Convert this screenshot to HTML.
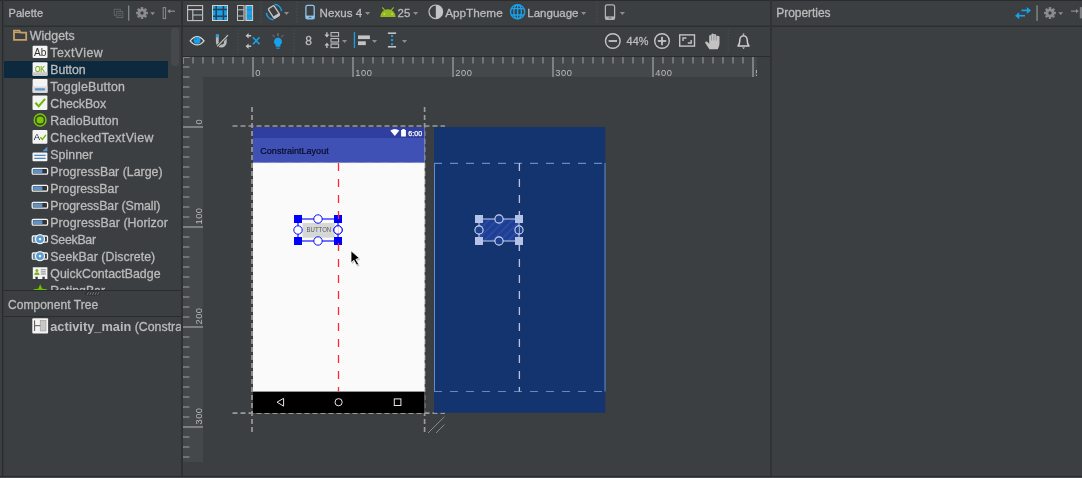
<!DOCTYPE html>
<html><head><meta charset="utf-8"><title>Layout Editor</title>
<style>
html,body{margin:0;padding:0;}
body{width:1082px;height:478px;overflow:hidden;background:#3c3f41;font-family:"Liberation Sans",sans-serif;color:#bbbbbb;position:relative;font-size:12px;}
.abs{position:absolute;}
.ln{position:absolute;background:#2b2b2b;}
.t{position:absolute;white-space:nowrap;line-height:14px;}
#palette{position:absolute;left:4px;top:26px;width:178px;height:264px;overflow:hidden;}
.row{position:absolute;left:0;width:164px;height:17px;overflow:hidden;}
.row .lbl{position:absolute;left:46px;top:1px;font-size:12.35px;line-height:15px;white-space:nowrap;}
.row svg{position:absolute;left:28px;top:0px;}
svg{display:block;overflow:visible;position:absolute;will-change:transform;}
svg text{font-family:"Liberation Sans",sans-serif;}
.lb{stroke:#bbbbbb;stroke-width:0.3px;}
</style></head><body>

<div class="ln" style="left:0;top:0;width:1082px;height:1px;"></div>
<div class="ln" style="left:2px;top:0;width:1px;height:477px;"></div>
<div class="ln" style="left:3px;top:0;width:1px;height:477px;background:#35383a;"></div>
<div class="ln" style="left:0;top:476px;width:1082px;height:1px;"></div>
<div class="ln" style="left:0;top:477px;width:1082px;height:1px;background:#4a4d4f;"></div>
<div class="ln" style="left:4px;top:25px;width:1078px;height:1px;background:#34373a;"></div>
<div class="ln" style="left:4px;top:26px;width:1078px;height:1px;background:#2d2f31;"></div>
<div class="ln" style="left:181px;top:0;width:2px;height:476px;background:#2e3032;"></div>
<div class="ln" style="left:770px;top:0;width:2px;height:476px;background:#303234;"></div>
<div class="ln" style="left:183px;top:56px;width:587px;height:1px;"></div>
<div class="ln" style="left:4px;top:290px;width:177px;height:1px;"></div>
<div class="ln" style="left:4px;top:316px;width:177px;height:1px;"></div>
<div class="abs" style="left:4px;top:61px;width:164px;height:17px;background:#0d293e;"></div>
<div class="abs" style="left:171px;top:28px;width:8px;height:38px;border-radius:4px;background:#46494b;"></div>
<svg style="left:183px;top:57px;overflow:hidden;" width="574" height="20" viewBox="183 57 574 20"><rect x="183" y="57" width="574" height="20" fill="#44484a"/><line x1="183" y1="57" x2="183" y2="63.5" stroke="#7d8081" stroke-width="1.6"/><line x1="193" y1="57" x2="193" y2="63.5" stroke="#7d8081" stroke-width="1.6"/><line x1="203" y1="57" x2="203" y2="63.5" stroke="#7d8081" stroke-width="1.6"/><line x1="213" y1="57" x2="213" y2="63.5" stroke="#7d8081" stroke-width="1.6"/><line x1="223" y1="57" x2="223" y2="63.5" stroke="#7d8081" stroke-width="1.6"/><line x1="233" y1="57" x2="233" y2="63.5" stroke="#7d8081" stroke-width="1.6"/><line x1="243" y1="57" x2="243" y2="63.5" stroke="#7d8081" stroke-width="1.6"/><line x1="253" y1="57" x2="253" y2="77" stroke="#7d8081" stroke-width="2"/><text x="255.3" y="76" font-size="9.3" fill="#bbbbbb" letter-spacing="0.5">0</text><line x1="263" y1="57" x2="263" y2="63.5" stroke="#7d8081" stroke-width="1.6"/><line x1="273" y1="57" x2="273" y2="63.5" stroke="#7d8081" stroke-width="1.6"/><line x1="283" y1="57" x2="283" y2="63.5" stroke="#7d8081" stroke-width="1.6"/><line x1="293" y1="57" x2="293" y2="63.5" stroke="#7d8081" stroke-width="1.6"/><line x1="303" y1="57" x2="303" y2="63.5" stroke="#7d8081" stroke-width="1.6"/><line x1="313" y1="57" x2="313" y2="63.5" stroke="#7d8081" stroke-width="1.6"/><line x1="323" y1="57" x2="323" y2="63.5" stroke="#7d8081" stroke-width="1.6"/><line x1="333" y1="57" x2="333" y2="63.5" stroke="#7d8081" stroke-width="1.6"/><line x1="343" y1="57" x2="343" y2="63.5" stroke="#7d8081" stroke-width="1.6"/><line x1="353" y1="57" x2="353" y2="77" stroke="#7d8081" stroke-width="2"/><text x="355.3" y="76" font-size="9.3" fill="#bbbbbb" letter-spacing="0.5">100</text><line x1="363" y1="57" x2="363" y2="63.5" stroke="#7d8081" stroke-width="1.6"/><line x1="373" y1="57" x2="373" y2="63.5" stroke="#7d8081" stroke-width="1.6"/><line x1="383" y1="57" x2="383" y2="63.5" stroke="#7d8081" stroke-width="1.6"/><line x1="393" y1="57" x2="393" y2="63.5" stroke="#7d8081" stroke-width="1.6"/><line x1="403" y1="57" x2="403" y2="63.5" stroke="#7d8081" stroke-width="1.6"/><line x1="413" y1="57" x2="413" y2="63.5" stroke="#7d8081" stroke-width="1.6"/><line x1="423" y1="57" x2="423" y2="63.5" stroke="#7d8081" stroke-width="1.6"/><line x1="433" y1="57" x2="433" y2="63.5" stroke="#7d8081" stroke-width="1.6"/><line x1="443" y1="57" x2="443" y2="63.5" stroke="#7d8081" stroke-width="1.6"/><line x1="453" y1="57" x2="453" y2="77" stroke="#7d8081" stroke-width="2"/><text x="455.3" y="76" font-size="9.3" fill="#bbbbbb" letter-spacing="0.5">200</text><line x1="463" y1="57" x2="463" y2="63.5" stroke="#7d8081" stroke-width="1.6"/><line x1="473" y1="57" x2="473" y2="63.5" stroke="#7d8081" stroke-width="1.6"/><line x1="483" y1="57" x2="483" y2="63.5" stroke="#7d8081" stroke-width="1.6"/><line x1="493" y1="57" x2="493" y2="63.5" stroke="#7d8081" stroke-width="1.6"/><line x1="503" y1="57" x2="503" y2="63.5" stroke="#7d8081" stroke-width="1.6"/><line x1="513" y1="57" x2="513" y2="63.5" stroke="#7d8081" stroke-width="1.6"/><line x1="523" y1="57" x2="523" y2="63.5" stroke="#7d8081" stroke-width="1.6"/><line x1="533" y1="57" x2="533" y2="63.5" stroke="#7d8081" stroke-width="1.6"/><line x1="543" y1="57" x2="543" y2="63.5" stroke="#7d8081" stroke-width="1.6"/><line x1="553" y1="57" x2="553" y2="77" stroke="#7d8081" stroke-width="2"/><text x="555.3" y="76" font-size="9.3" fill="#bbbbbb" letter-spacing="0.5">300</text><line x1="563" y1="57" x2="563" y2="63.5" stroke="#7d8081" stroke-width="1.6"/><line x1="573" y1="57" x2="573" y2="63.5" stroke="#7d8081" stroke-width="1.6"/><line x1="583" y1="57" x2="583" y2="63.5" stroke="#7d8081" stroke-width="1.6"/><line x1="593" y1="57" x2="593" y2="63.5" stroke="#7d8081" stroke-width="1.6"/><line x1="603" y1="57" x2="603" y2="63.5" stroke="#7d8081" stroke-width="1.6"/><line x1="613" y1="57" x2="613" y2="63.5" stroke="#7d8081" stroke-width="1.6"/><line x1="623" y1="57" x2="623" y2="63.5" stroke="#7d8081" stroke-width="1.6"/><line x1="633" y1="57" x2="633" y2="63.5" stroke="#7d8081" stroke-width="1.6"/><line x1="643" y1="57" x2="643" y2="63.5" stroke="#7d8081" stroke-width="1.6"/><line x1="653" y1="57" x2="653" y2="77" stroke="#7d8081" stroke-width="2"/><text x="655.3" y="76" font-size="9.3" fill="#bbbbbb" letter-spacing="0.5">400</text><line x1="663" y1="57" x2="663" y2="63.5" stroke="#7d8081" stroke-width="1.6"/><line x1="673" y1="57" x2="673" y2="63.5" stroke="#7d8081" stroke-width="1.6"/><line x1="683" y1="57" x2="683" y2="63.5" stroke="#7d8081" stroke-width="1.6"/><line x1="693" y1="57" x2="693" y2="63.5" stroke="#7d8081" stroke-width="1.6"/><line x1="703" y1="57" x2="703" y2="63.5" stroke="#7d8081" stroke-width="1.6"/><line x1="713" y1="57" x2="713" y2="63.5" stroke="#7d8081" stroke-width="1.6"/><line x1="723" y1="57" x2="723" y2="63.5" stroke="#7d8081" stroke-width="1.6"/><line x1="733" y1="57" x2="733" y2="63.5" stroke="#7d8081" stroke-width="1.6"/><line x1="743" y1="57" x2="743" y2="63.5" stroke="#7d8081" stroke-width="1.6"/><line x1="753" y1="57" x2="753" y2="77" stroke="#7d8081" stroke-width="2"/><text x="755.3" y="76" font-size="9.3" fill="#bbbbbb" letter-spacing="0.5">500</text><line x1="183" y1="67" x2="189.5" y2="67" stroke="#7d8081" stroke-width="1.6"/></svg>
<svg style="left:183px;top:77px;" width="20" height="385" viewBox="183 77 20 385"><rect x="183" y="77" width="20" height="385" fill="#44484a"/><line x1="183" y1="77" x2="189.5" y2="77" stroke="#7d8081" stroke-width="1.6"/><line x1="183" y1="87" x2="189.5" y2="87" stroke="#7d8081" stroke-width="1.6"/><line x1="183" y1="97" x2="189.5" y2="97" stroke="#7d8081" stroke-width="1.6"/><line x1="183" y1="107" x2="189.5" y2="107" stroke="#7d8081" stroke-width="1.6"/><line x1="183" y1="117" x2="189.5" y2="117" stroke="#7d8081" stroke-width="1.6"/><line x1="183" y1="127" x2="203" y2="127" stroke="#7d8081" stroke-width="2"/><text transform="translate(202,124.5) rotate(-90)" font-size="9.3" letter-spacing="0.5" fill="#bbbbbb">0</text><line x1="183" y1="137" x2="189.5" y2="137" stroke="#7d8081" stroke-width="1.6"/><line x1="183" y1="147" x2="189.5" y2="147" stroke="#7d8081" stroke-width="1.6"/><line x1="183" y1="157" x2="189.5" y2="157" stroke="#7d8081" stroke-width="1.6"/><line x1="183" y1="167" x2="189.5" y2="167" stroke="#7d8081" stroke-width="1.6"/><line x1="183" y1="177" x2="189.5" y2="177" stroke="#7d8081" stroke-width="1.6"/><line x1="183" y1="187" x2="189.5" y2="187" stroke="#7d8081" stroke-width="1.6"/><line x1="183" y1="197" x2="189.5" y2="197" stroke="#7d8081" stroke-width="1.6"/><line x1="183" y1="207" x2="189.5" y2="207" stroke="#7d8081" stroke-width="1.6"/><line x1="183" y1="217" x2="189.5" y2="217" stroke="#7d8081" stroke-width="1.6"/><line x1="183" y1="227" x2="203" y2="227" stroke="#7d8081" stroke-width="2"/><text transform="translate(202,224.5) rotate(-90)" font-size="9.3" letter-spacing="0.5" fill="#bbbbbb">100</text><line x1="183" y1="237" x2="189.5" y2="237" stroke="#7d8081" stroke-width="1.6"/><line x1="183" y1="247" x2="189.5" y2="247" stroke="#7d8081" stroke-width="1.6"/><line x1="183" y1="257" x2="189.5" y2="257" stroke="#7d8081" stroke-width="1.6"/><line x1="183" y1="267" x2="189.5" y2="267" stroke="#7d8081" stroke-width="1.6"/><line x1="183" y1="277" x2="189.5" y2="277" stroke="#7d8081" stroke-width="1.6"/><line x1="183" y1="287" x2="189.5" y2="287" stroke="#7d8081" stroke-width="1.6"/><line x1="183" y1="297" x2="189.5" y2="297" stroke="#7d8081" stroke-width="1.6"/><line x1="183" y1="307" x2="189.5" y2="307" stroke="#7d8081" stroke-width="1.6"/><line x1="183" y1="317" x2="189.5" y2="317" stroke="#7d8081" stroke-width="1.6"/><line x1="183" y1="327" x2="203" y2="327" stroke="#7d8081" stroke-width="2"/><text transform="translate(202,324.5) rotate(-90)" font-size="9.3" letter-spacing="0.5" fill="#bbbbbb">200</text><line x1="183" y1="337" x2="189.5" y2="337" stroke="#7d8081" stroke-width="1.6"/><line x1="183" y1="347" x2="189.5" y2="347" stroke="#7d8081" stroke-width="1.6"/><line x1="183" y1="357" x2="189.5" y2="357" stroke="#7d8081" stroke-width="1.6"/><line x1="183" y1="367" x2="189.5" y2="367" stroke="#7d8081" stroke-width="1.6"/><line x1="183" y1="377" x2="189.5" y2="377" stroke="#7d8081" stroke-width="1.6"/><line x1="183" y1="387" x2="189.5" y2="387" stroke="#7d8081" stroke-width="1.6"/><line x1="183" y1="397" x2="189.5" y2="397" stroke="#7d8081" stroke-width="1.6"/><line x1="183" y1="407" x2="189.5" y2="407" stroke="#7d8081" stroke-width="1.6"/><line x1="183" y1="417" x2="189.5" y2="417" stroke="#7d8081" stroke-width="1.6"/><line x1="183" y1="427" x2="203" y2="427" stroke="#7d8081" stroke-width="2"/><text transform="translate(202,424.5) rotate(-90)" font-size="9.3" letter-spacing="0.5" fill="#bbbbbb">300</text><line x1="183" y1="437" x2="189.5" y2="437" stroke="#7d8081" stroke-width="1.6"/><line x1="183" y1="447" x2="189.5" y2="447" stroke="#7d8081" stroke-width="1.6"/><line x1="183" y1="457" x2="189.5" y2="457" stroke="#7d8081" stroke-width="1.6"/></svg>
<svg style="left:183px;top:57px;" width="8" height="8"><path d="M0.5 7 V0.5 H7" stroke="#7d8081" stroke-width="1" fill="none"/></svg>
<svg style="left:203px;top:77px;" width="554" height="385" viewBox="203 77 554 385"><line x1="232.5" y1="126" x2="445" y2="126" stroke="#9a9a97" stroke-width="1.7" stroke-dasharray="5 3"/><line x1="232.5" y1="413.1" x2="445" y2="413.1" stroke="#9a9a97" stroke-width="1.7" stroke-dasharray="5 3"/><line x1="252" y1="107" x2="252" y2="432" stroke="#9a9a97" stroke-width="1.7" stroke-dasharray="5 3"/><line x1="424.6" y1="107" x2="424.6" y2="432" stroke="#9a9a97" stroke-width="1.7" stroke-dasharray="5 3"/><rect x="253" y="127" width="171.6" height="286" fill="#fafafa"/><rect x="253" y="127" width="171.6" height="11" fill="#303f9f"/><rect x="253" y="138" width="171.6" height="24.7" fill="#3f51b5"/><rect x="253" y="391.6" width="171.6" height="21.4" fill="#000"/><line x1="253" y1="162.6" x2="424" y2="162.6" stroke="#8a96d6" stroke-width="1" stroke-dasharray="8 8" opacity="0.6"/><text x="260.3" y="153.9" font-size="9" fill="#080c28" stroke="#080c28" stroke-width="0.2" textLength="68.4" lengthAdjust="spacing">ConstraintLayout</text><path d="M390.3 130.6 Q394.8 127.6 399.3 130.6 L394.8 136 Z" fill="#fff"/><path d="M401.1 130 h1.2 v-1 h2.4 v1 h1.2 v6.5 h-4.8 Z" fill="#fff"/><text x="408.3" y="135.9" font-size="7" fill="#fff" stroke="#fff" stroke-width="0.25" textLength="13.8" lengthAdjust="spacing">6:00</text><path d="M283.6 398.3 L277 402.2 L283.6 406.1 Z" fill="none" stroke="#e8e8e8" stroke-width="1"/><circle cx="338.6" cy="402.2" r="3.6" fill="none" stroke="#e8e8e8" stroke-width="1"/><rect x="394.3" y="398.9" width="6.6" height="6.6" fill="none" stroke="#e8e8e8" stroke-width="1"/><rect x="302.5" y="223" width="32.3" height="14.7" fill="#d6d7d7"/><text x="306.6" y="232.4" font-size="6.6" fill="#5a5a5a" textLength="24.6" lengthAdjust="spacingAndGlyphs">BUTTON</text><rect x="298" y="219" width="40" height="22" fill="none" stroke="#0000ff" stroke-width="1.1"/><rect x="294" y="215" width="8" height="8" fill="#0000ff"/><rect x="334" y="215" width="8" height="8" fill="#0000ff"/><rect x="294" y="237" width="8" height="8" fill="#0000ff"/><rect x="334" y="237" width="8" height="8" fill="#0000ff"/><circle cx="318" cy="219" r="4.2" fill="#fff" stroke="#0a0aff" stroke-width="1"/><circle cx="318" cy="241" r="4.2" fill="#fff" stroke="#0a0aff" stroke-width="1"/><circle cx="298" cy="230" r="4.2" fill="#fff" stroke="#0a0aff" stroke-width="1"/><circle cx="338" cy="230" r="4.2" fill="#fff" stroke="#0a0aff" stroke-width="1"/><line x1="338.5" y1="163" x2="338.5" y2="391.5" stroke="#ff2a2a" stroke-width="1.3" stroke-dasharray="8 8"/><circle cx="338" cy="230" r="4.2" fill="#fff" fill-opacity="0.8" stroke="#0a0aff" stroke-width="1"/><path d="M428 433 L444.4 416.8 M436 433 L444.4 424.7" stroke="#8a8c8d" stroke-width="1" fill="none"/><rect x="434" y="127" width="171.2" height="285.8" fill="#14346f"/><line x1="434" y1="163.3" x2="605" y2="163.3" stroke="#6189c4" stroke-width="1.2" stroke-dasharray="8 8"/><line x1="434" y1="391.5" x2="605" y2="391.5" stroke="#6189c4" stroke-width="1.2" stroke-dasharray="8 8"/><line x1="434.5" y1="163" x2="434.5" y2="391.5" stroke="#5f8ed0" stroke-width="1"/><line x1="605" y1="163" x2="605" y2="391.5" stroke="#5f8ed0" stroke-width="1"/><line x1="519.4" y1="163" x2="519.4" y2="391.5" stroke="#b9c2d6" stroke-width="1.3" stroke-dasharray="8 8"/><defs><pattern id="hatch" width="5.6" height="5.6" patternUnits="userSpaceOnUse" patternTransform="rotate(45)"><line x1="3" y1="0" x2="3" y2="5.6" stroke="#4b4fd0" stroke-width="0.7"/></pattern></defs><rect x="479" y="219" width="40" height="22" fill="#1d4190"/><rect x="479" y="219" width="40" height="22" fill="url(#hatch)"/><rect x="479" y="219" width="40" height="22" fill="none" stroke="#b4c3e8" stroke-width="1.1"/><rect x="475" y="215" width="8" height="8" fill="#b4c3e8"/><rect x="515" y="215" width="8" height="8" fill="#b4c3e8"/><rect x="475" y="237" width="8" height="8" fill="#b4c3e8"/><rect x="515" y="237" width="8" height="8" fill="#b4c3e8"/><circle cx="499" cy="219" r="4.1" fill="#1d4190" stroke="#d0d8ee" stroke-width="1.1"/><circle cx="499" cy="241" r="4.1" fill="#1d4190" stroke="#d0d8ee" stroke-width="1.1"/><circle cx="479" cy="230" r="4.1" fill="#1d4190" stroke="#d0d8ee" stroke-width="1.1"/><circle cx="519" cy="230" r="4.1" fill="#1d4190" stroke="#d0d8ee" stroke-width="1.1"/><line x1="519.4" y1="211" x2="519.4" y2="251" stroke="#b9c2d6" stroke-width="1.1" stroke-dasharray="8 8" opacity="0.8"/><g transform="translate(351,250.8)"><path d="M0 0 L0 12 L2.9 9.4 L5.7 14.4 L7.7 13.4 L4.9 8.5 L8.6 7.5 Z" fill="#000" opacity="0.22" transform="translate(0.9,1.5)"/><path d="M0 0 L0 12 L2.9 9.4 L5.7 14.4 L7.7 13.4 L4.9 8.5 L8.6 7.5 Z" fill="#000" stroke="#fff" stroke-width="0.8" stroke-linejoin="round"/></g></svg>
<svg class="ui" style="left:0;top:0;will-change:transform;" width="1082" height="478" viewBox="0 0 1082 478"><g stroke="#5f6364" stroke-width="1" fill="#3c3f41"><rect x="114.3" y="9.3" width="6" height="6"/><rect x="116.8" y="11.5" width="6" height="6"/><path d="M118.3 13.6 h3 M118.3 15.6 h3" fill="none"/></g><rect x="128.1" y="5.5" width="1.2" height="15.2" fill="#8a8c8d"/><g transform="translate(142,13)"><rect x="-1.25" y="-5.9" width="2.5" height="11.8" fill="#8c8c8c" transform="rotate(0.0)"/><rect x="-1.25" y="-5.9" width="2.5" height="11.8" fill="#8c8c8c" transform="rotate(45.0)"/><rect x="-1.25" y="-5.9" width="2.5" height="11.8" fill="#8c8c8c" transform="rotate(90.0)"/><rect x="-1.25" y="-5.9" width="2.5" height="11.8" fill="#8c8c8c" transform="rotate(135.0)"/><circle r="4.300000000000001" fill="#8c8c8c"/><circle r="1.7" fill="#3c3f41"/></g><path d="M150.2 12.2 h4.8 l-2.4 2.8 Z" fill="#8c8c8c"/><rect x="163.2" y="7.6" width="2.4" height="11" fill="none" stroke="#8c8c8c" stroke-width="1"/><path d="M168 11.2 h7" stroke="#8c8c8c" stroke-width="1.2"/><path d="M167.4 11.2 l2.8 -2.2 v4.4 Z" fill="#8c8c8c"/><path d="M1021.4 10.4 h6.5" stroke="#18a0e8" stroke-width="1.7"/><path d="M1031 10.4 l-4.2 -3.5 v7 Z" fill="#18a0e8"/><path d="M1025 15.7 h-6.5" stroke="#18a0e8" stroke-width="1.7"/><path d="M1015 15.7 l4.2 -3.5 v7 Z" fill="#18a0e8"/><rect x="1036.4" y="5.3" width="1.3" height="15.6" fill="#8a8c8d"/><g transform="translate(1050,13)"><rect x="-1.25" y="-5.9" width="2.5" height="11.8" fill="#8c8c8c" transform="rotate(0.0)"/><rect x="-1.25" y="-5.9" width="2.5" height="11.8" fill="#8c8c8c" transform="rotate(45.0)"/><rect x="-1.25" y="-5.9" width="2.5" height="11.8" fill="#8c8c8c" transform="rotate(90.0)"/><rect x="-1.25" y="-5.9" width="2.5" height="11.8" fill="#8c8c8c" transform="rotate(135.0)"/><circle r="4.300000000000001" fill="#8c8c8c"/><circle r="1.7" fill="#3c3f41"/></g><path d="M1058.3 12.2 h4.8 l-2.4 2.8 Z" fill="#8c8c8c"/><path d="M1071 11.1 h5" stroke="#8c8c8c" stroke-width="1.2"/><path d="M1078.8 11.1 l-2.8 -2.2 v4.4 Z" fill="#8c8c8c"/><rect x="1079.8" y="7.1" width="2.4" height="11.3" fill="#7c7f81"/><g fill="none" stroke="#c4c4c4" stroke-width="1.1"><rect x="187.6" y="5.6" width="15" height="15"/><path d="M187.6 9.6 h15 M192.8 9.6 v11"/><path d="M192.8 15 h9.8" stroke="#aebdc8"/></g><rect x="212.5" y="5.5" width="15" height="15" fill="#18a0e8" stroke="#d6cfc8" stroke-width="1"/><path d="M216.2 6 v14 M223.4 6 v14 M213 9.4 h14 M213 16.2 h14" stroke="#2b3f52" stroke-width="1.5" fill="none"/><rect x="237.5" y="5.5" width="6.4" height="15" fill="none" stroke="#c4c4c4" stroke-width="1"/><path d="M237.5 9.8 h6.4" stroke="#c4c4c4" stroke-width="1"/><path d="M237.5 16 h6.4" stroke="#aebdc8" stroke-width="1"/><rect x="244" y="5" width="1.9" height="16" fill="#8a8c8d"/><rect x="246.2" y="5.5" width="6.4" height="15" fill="#18a0e8" stroke="#d6cfc8" stroke-width="1"/><path d="M246.7 9.8 h5.4 M246.7 16 h5.4" stroke="#3f7fa8" stroke-width="1"/><rect x="260.5" y="2.1" width="1" height="1" fill="#53575a"/><rect x="260.5" y="5.2" width="1" height="1" fill="#53575a"/><rect x="260.5" y="8.3" width="1" height="1" fill="#53575a"/><rect x="260.5" y="11.4" width="1" height="1" fill="#53575a"/><rect x="260.5" y="14.5" width="1" height="1" fill="#53575a"/><rect x="260.5" y="17.6" width="1" height="1" fill="#53575a"/><rect x="260.5" y="20.700000000000003" width="1" height="1" fill="#53575a"/><g transform="translate(274,12) rotate(-33)"><rect x="-3.4" y="-5.7" width="6.8" height="11.4" rx="1.2" fill="none" stroke="#c4c4c4" stroke-width="1.3"/><rect x="-3.4" y="3.4" width="6.8" height="2.3" fill="#c4c4c4"/></g><path d="M274.6 4.2 A7.9 7.9 0 0 1 281.6 11.2" fill="none" stroke="#18a0e8" stroke-width="1.5"/><path d="M273.4 19.8 A7.9 7.9 0 0 1 266.4 12.8" fill="none" stroke="#18a0e8" stroke-width="1.5"/><path d="M284 12 h5 l-2.5 2.9 Z" fill="#8c8c8c"/><rect x="296.5" y="2.1" width="1" height="1" fill="#53575a"/><rect x="296.5" y="5.2" width="1" height="1" fill="#53575a"/><rect x="296.5" y="8.3" width="1" height="1" fill="#53575a"/><rect x="296.5" y="11.4" width="1" height="1" fill="#53575a"/><rect x="296.5" y="14.5" width="1" height="1" fill="#53575a"/><rect x="296.5" y="17.6" width="1" height="1" fill="#53575a"/><rect x="296.5" y="20.700000000000003" width="1" height="1" fill="#53575a"/><rect x="305.9" y="5.4" width="8.3" height="13.4" rx="1.6" fill="#3c3f41" stroke="#8fc4f0" stroke-width="1.3"/><rect x="305.9" y="15.6" width="8.3" height="3.2" fill="#8fc4f0"/><rect x="308.8" y="16.9" width="2.6" height="0.8" fill="#3c3f41"/><path d="M365 12 h5.2 l-2.6 3 Z" fill="#8c8c8c"/><path d="M380.3 16.9 a7.65 7.65 0 0 1 15.3 0 Z" fill="#95b91f"/><path d="M382.3 7.3 l2.6 3.4 M393.6 7.3 l-2.6 3.4" stroke="#95b91f" stroke-width="1.1"/><rect x="383.6" y="13.2" width="1.5" height="1.5" fill="#c9dc8a"/><rect x="391.3" y="13.2" width="1.5" height="1.5" fill="#c9dc8a"/><path d="M413 12 h5.2 l-2.6 3 Z" fill="#8c8c8c"/><circle cx="435.8" cy="11.8" r="6.8" fill="none" stroke="#c4c4c4" stroke-width="1.2"/><path d="M435.8 5 a6.8 6.8 0 0 1 0 13.6 Z" fill="#c4c4c4"/><g fill="none" stroke="#18a0e8" stroke-width="1.4"><circle cx="517.6" cy="11.8" r="7.1"/><ellipse cx="517.6" cy="11.8" rx="3.8" ry="7.1"/><path d="M517.6 4.7 v14.2 M511.2 8.6 h12.8 M511.2 15 h12.8"/></g><path d="M581 12 h5.2 l-2.6 3 Z" fill="#8c8c8c"/><rect x="596.5" y="2.1" width="1" height="1" fill="#53575a"/><rect x="596.5" y="5.2" width="1" height="1" fill="#53575a"/><rect x="596.5" y="8.3" width="1" height="1" fill="#53575a"/><rect x="596.5" y="11.4" width="1" height="1" fill="#53575a"/><rect x="596.5" y="14.5" width="1" height="1" fill="#53575a"/><rect x="596.5" y="17.6" width="1" height="1" fill="#53575a"/><rect x="596.5" y="20.700000000000003" width="1" height="1" fill="#53575a"/><rect x="605.4" y="4.9" width="9.2" height="14.6" rx="1.7" fill="#3c3f41" stroke="#b4b4b4" stroke-width="1.2"/><rect x="605.4" y="16.4" width="9.2" height="3.1" fill="#b4b4b4"/><rect x="608.7" y="17.6" width="2.6" height="0.8" fill="#3c3f41"/><path d="M619.8 12 h5.2 l-2.6 3 Z" fill="#8c8c8c"/><path d="M190.2 40.8 Q197.1 32.6 204 40.8 Q197.1 49 190.2 40.8 Z" fill="none" stroke="#dadada" stroke-width="1.3"/><circle cx="197.1" cy="40.4" r="3.4" fill="#18a0e8"/><circle cx="195.9" cy="39.2" r="0.8" fill="#2a6f9c"/><path d="M215.9 34.6 h2.8 v7.4 a2.6 2.6 0 0 0 5.2 0 v-2.6 l2.8 -2.8 v5.6 a5.4 5.4 0 0 1 -10.8 0 Z" fill="#b8b8b8"/><rect x="215.9" y="34.6" width="2.8" height="2.8" fill="#18a0e8"/><path d="M226.3 34.6 v2" stroke="#18a0e8" stroke-width="0.8"/><path d="M228 35.2 L217.2 46.4" stroke="#3c3f41" stroke-width="2.6"/><path d="M228 35.2 L217.2 46.4" stroke="#c8c8c8" stroke-width="1.1"/><rect x="237.5" y="30.1" width="1" height="1" fill="#53575a"/><rect x="237.5" y="33.2" width="1" height="1" fill="#53575a"/><rect x="237.5" y="36.300000000000004" width="1" height="1" fill="#53575a"/><rect x="237.5" y="39.400000000000006" width="1" height="1" fill="#53575a"/><rect x="237.5" y="42.50000000000001" width="1" height="1" fill="#53575a"/><rect x="237.5" y="45.60000000000001" width="1" height="1" fill="#53575a"/><rect x="237.5" y="48.70000000000001" width="1" height="1" fill="#53575a"/><rect x="237.5" y="51.80000000000001" width="1" height="1" fill="#53575a"/><path d="M248 35.8 h3.2 M248 46.3 h3.2" stroke="#c4c4c4" stroke-width="1.4"/><path d="M245.6 35.8 l3 -2.7 v5.4 Z M245.6 46.3 l3 -2.7 v5.4 Z" fill="#c4c4c4"/><path d="M252.9 37.3 l6.6 7 M259.5 37.3 l-6.6 7" stroke="#18a0e8" stroke-width="1.6"/><path d="M278 37.5 a4 4 0 0 1 2.4 7.2 v2 h-4.8 v-2 A4 4 0 0 1 278 37.5 Z" fill="#18a0e8"/><rect x="276.3" y="47.6" width="3.4" height="1.1" fill="#18a0e8"/><path d="M278 33.2 v2.8 M272.6 35.2 l2 1.6 M283.4 35.2 l-2 1.6" stroke="#8a8c8d" stroke-width="0.9"/><rect x="293.5" y="30.1" width="1" height="1" fill="#53575a"/><rect x="293.5" y="33.2" width="1" height="1" fill="#53575a"/><rect x="293.5" y="36.300000000000004" width="1" height="1" fill="#53575a"/><rect x="293.5" y="39.400000000000006" width="1" height="1" fill="#53575a"/><rect x="293.5" y="42.50000000000001" width="1" height="1" fill="#53575a"/><rect x="293.5" y="45.60000000000001" width="1" height="1" fill="#53575a"/><rect x="293.5" y="48.70000000000001" width="1" height="1" fill="#53575a"/><rect x="293.5" y="51.80000000000001" width="1" height="1" fill="#53575a"/><g fill="none" stroke="#c4c4c4" stroke-width="1"><rect x="331" y="32.6" width="7.6" height="3.6"/><rect x="331" y="38.6" width="7.6" height="3.4"/><rect x="331" y="44.1" width="7.6" height="3.6"/></g><rect x="331" y="42" width="7.6" height="2" fill="#8a8c8d"/><path d="M326.9 32.2 v3 M326.9 48 v-3" stroke="#c4c4c4" stroke-width="1.3"/><path d="M324.4 34.6 h5 l-2.5 2.8 Z M324.4 45.6 h5 l-2.5 -2.8 Z" fill="#c4c4c4"/><path d="M342 39.9 h5.1 l-2.55 3 Z" fill="#8c8c8c"/><rect x="353.8" y="32.1" width="1.3" height="16" fill="#18a0e8"/><rect x="358" y="35.4" width="11.9" height="3.7" fill="#c4c4c4"/><rect x="358" y="41.3" width="7.8" height="3.8" fill="#c4c4c4"/><path d="M372 39.9 h5.1 l-2.55 3 Z" fill="#8c8c8c"/><rect x="387.9" y="32.4" width="8.2" height="1.6" fill="#c4c4c4"/><rect x="387.9" y="46" width="8.2" height="1.6" fill="#c4c4c4"/><rect x="391" y="35.1" width="2.1" height="1.9" fill="#18a0e8"/><rect x="391" y="39.1" width="2.1" height="1.9" fill="#18a0e8"/><rect x="391" y="43.2" width="2.1" height="1.9" fill="#18a0e8"/><path d="M402 39.9 h5.1 l-2.55 3 Z" fill="#8c8c8c"/><circle cx="612.8" cy="41" r="7.3" fill="none" stroke="#c4c4c4" stroke-width="1.4"/><rect x="608.6" y="40.1" width="8.4" height="1.8" fill="#c4c4c4"/><circle cx="662" cy="41" r="7.3" fill="none" stroke="#c4c4c4" stroke-width="1.4"/><rect x="657.8" y="40.1" width="8.4" height="1.8" fill="#c4c4c4"/><rect x="661.1" y="36.8" width="1.8" height="8.4" fill="#c4c4c4"/><rect x="679.7" y="34.9" width="14.8" height="11.2" fill="none" stroke="#c4c4c4" stroke-width="1.4"/><path d="M683 41 v-3 h3.4 M691.2 40 v3 h-3.4" fill="none" stroke="#c4c4c4" stroke-width="1.4"/><path d="M709.4 49.2 L705.1 42.8 Q705.5 41 707.2 41.8 L709.2 43.8 V35.8 Q710.3 34.4 711.4 35.8 V34.3 Q712.6 32.9 713.8 34.3 V34.6 Q715 33.4 716.2 34.8 V36.2 Q717.7 35 719.5 36.4 V43.5 Q719.5 46.6 717.8 49.2 Z" fill="#c2c2c2"/><path d="M711.5 36 V40.5 M713.9 35 V40.5 M716.3 35.6 V40.5" stroke="#6a6d6f" stroke-width="0.5"/><rect x="727.7" y="30.1" width="1" height="1" fill="#53575a"/><rect x="727.7" y="33.2" width="1" height="1" fill="#53575a"/><rect x="727.7" y="36.300000000000004" width="1" height="1" fill="#53575a"/><rect x="727.7" y="39.400000000000006" width="1" height="1" fill="#53575a"/><rect x="727.7" y="42.50000000000001" width="1" height="1" fill="#53575a"/><rect x="727.7" y="45.60000000000001" width="1" height="1" fill="#53575a"/><rect x="727.7" y="48.70000000000001" width="1" height="1" fill="#53575a"/><rect x="727.7" y="51.80000000000001" width="1" height="1" fill="#53575a"/><path d="M743.5 33.6 v1.2 M738 46 Q739.8 44 739.8 40.2 A3.7 4.4 0 0 1 747.2 40.2 Q747.2 44 749 46 Z" fill="none" stroke="#d0d0d0" stroke-width="1.5" stroke-linejoin="round"/><path d="M742 47.5 h3 l-1.5 1.6 Z" fill="#d0d0d0"/><path d="M14 32.6 v-2 h5.4 l1.1 2 h5.7 v7.2 h-12.2 Z" fill="none" stroke="#c9a065" stroke-width="1.8" stroke-linejoin="miter"/><path d="M14 32.4 h6" stroke="#c9a065" stroke-width="1.4"/><rect x="32.6" y="45.8" width="14.9" height="12.2" rx="1" fill="#f4f4f4"/><text x="33.9" y="55.9" font-size="10.6" fill="#333" textLength="12.4" lengthAdjust="spacingAndGlyphs">Ab</text><rect x="32.6" y="62.3" width="14.9" height="13.5" rx="1" fill="#f4f4f4"/><rect x="32.6" y="72.3" width="14.9" height="3.5" fill="#c9c9c9"/><text x="35" y="72" font-size="8.8" fill="#7aa818" stroke="#7aa818" stroke-width="0.25" textLength="9.9" lengthAdjust="spacingAndGlyphs">OK</text><rect x="32.6" y="79" width="14.9" height="13.7" rx="1" fill="#f4f4f4"/><rect x="32.6" y="86.5" width="14.9" height="6.2" fill="#dcdcdc"/><rect x="34.8" y="88.2" width="10.4" height="2.2" rx="1" fill="#5b93cf"/><rect x="32.5" y="95.5" width="14.9" height="14.6" rx="1" fill="#f4f4f4"/><path d="M35.4 102.8 l3.3 3.4 l6.4 -7.4" fill="none" stroke="#6cb800" stroke-width="2"/><circle cx="40.1" cy="120" r="5.9" fill="none" stroke="#7cc800" stroke-width="1.5"/><circle cx="40.1" cy="120" r="3.6" fill="#7cc800"/><rect x="32.5" y="129.9" width="14.9" height="13.9" rx="1" fill="#f4f4f4"/><text x="33.7" y="139.8" font-size="9.4" fill="#222" font-family="Liberation Mono,monospace">A</text><path d="M40.4 137.3 l1.9 2.1 l3.6 -4.4" fill="none" stroke="#6cb800" stroke-width="1.3"/><rect x="32.5" y="152.5" width="14.9" height="8.8" rx="1" fill="#f4f4f4"/><path d="M34.3 155.4 h11.3 M34.3 158.4 h11.3" stroke="#4a86c8" stroke-width="1.1"/><path d="M47.4 146.4 v4.8 h-5 Z" fill="#5b93cf"/><rect x="32.2" y="168.29999999999998" width="15.4" height="5.8" rx="1.2" fill="#333" stroke="#f4f4f4" stroke-width="1.3"/><rect x="33.2" y="169.29999999999998" width="9.2" height="3.8" fill="#5e93c8"/><rect x="32.2" y="185.29999999999998" width="15.4" height="5.8" rx="1.2" fill="#333" stroke="#f4f4f4" stroke-width="1.3"/><rect x="33.2" y="186.29999999999998" width="9.2" height="3.8" fill="#5e93c8"/><rect x="32.2" y="202.29999999999998" width="15.4" height="5.8" rx="1.2" fill="#333" stroke="#f4f4f4" stroke-width="1.3"/><rect x="33.2" y="203.29999999999998" width="9.2" height="3.8" fill="#5e93c8"/><rect x="32.2" y="219.29999999999998" width="15.4" height="5.8" rx="1.2" fill="#333" stroke="#f4f4f4" stroke-width="1.3"/><rect x="33.2" y="220.29999999999998" width="9.2" height="3.8" fill="#5e93c8"/><rect x="32.3" y="236.0" width="15.2" height="6.2" rx="1" fill="#333" stroke="#f4f4f4" stroke-width="1.3"/><rect x="33.2" y="237.0" width="2.6" height="4.2" fill="#5b9bd0"/><circle cx="40" cy="239.1" r="5.2" fill="#f4f4f4"/><circle cx="40" cy="239.1" r="3.9" fill="#5b9bd0"/><rect x="38.9" y="238.0" width="2.2" height="2.2" fill="#f4f4f4"/><rect x="32.3" y="253.00000000000003" width="15.2" height="6.2" rx="1" fill="#333" stroke="#f4f4f4" stroke-width="1.3"/><rect x="33.2" y="254.00000000000003" width="2.6" height="4.2" fill="#5b9bd0"/><circle cx="40" cy="256.1" r="5.2" fill="#f4f4f4"/><circle cx="40" cy="256.1" r="3.9" fill="#5b9bd0"/><rect x="38.9" y="255.00000000000003" width="2.2" height="2.2" fill="#f4f4f4"/><path d="M32.8 267.3 h14.6 v11.7 h-2.6 v-2.3 h-2.4 v2.3 h-4.6 v-2.3 h-2.4 v2.3 h-2.6 Z" fill="#f4f4f4"/><circle cx="36.9" cy="270.4" r="1.5" fill="#7cb51f"/><path d="M34.3 275 q0 -2.8 2.6 -2.8 q2.6 0 2.6 2.8 Z" fill="#7cb51f"/><path d="M40.8 269.8 h5 M40.8 271.9 h5 M40.8 274 h5" stroke="#777" stroke-width="0.9"/><clipPath id="rb"><rect x="28" y="280" width="30" height="10"/></clipPath><path clip-path="url(#rb)" d="M40.2 284.2 l2 4.6 l5 0.4 l-3.8 3.3 l1.2 4.9 l-4.4 -2.6 l-4.4 2.6 l1.2 -4.9 l-3.8 -3.3 l5 -0.4 Z" fill="#6cc000"/><rect x="85" y="291.4" width="15.2" height="4.2" rx="2" fill="#2f3133"/><path d="M87.2 294.8 l1.3 -2.6" stroke="#9a9a9a" stroke-width="0.7"/><path d="M89.8 294.8 l1.3 -2.6" stroke="#9a9a9a" stroke-width="0.7"/><path d="M92.4 294.8 l1.3 -2.6" stroke="#9a9a9a" stroke-width="0.7"/><path d="M95.0 294.8 l1.3 -2.6" stroke="#9a9a9a" stroke-width="0.7"/><path d="M97.60000000000001 294.8 l1.3 -2.6" stroke="#9a9a9a" stroke-width="0.7"/><rect x="32.3" y="318.3" width="15.8" height="15.3" rx="1" fill="#f4f4f4"/><rect x="40.2" y="320.4" width="5.8" height="10.6" fill="#c8c8c8" stroke="#999" stroke-width="0.6"/><path d="M34.6 320.4 v10.6 M34.6 325.7 h5.6" stroke="#555" stroke-width="1" fill="none"/><text class="lb" x="8.5" y="16.8" font-size="11" fill="#bbbbbb" textLength="34.6" lengthAdjust="spacing" >Palette</text><text class="lb" x="8.1" y="309.1" font-size="12" fill="#bbbbbb" textLength="90" lengthAdjust="spacing" >Component Tree</text><text class="lb" x="776.3" y="17.1" font-size="12" fill="#bbbbbb" textLength="54.2" lengthAdjust="spacing" >Properties</text><clipPath id="pc"><rect x="4" y="26" width="164" height="264"/></clipPath><g clip-path="url(#pc)"><text class="lb" x="29.8" y="40" font-size="12.35" fill="#bbbbbb" textLength="44.9" lengthAdjust="spacing" >Widgets</text><text class="lb" x="50.3" y="56.8" font-size="12.35" fill="#bbbbbb" textLength="52.4" lengthAdjust="spacing" >TextView</text><text class="lb" x="50.3" y="73.8" font-size="12.35" fill="#bbbbbb" textLength="35.3" lengthAdjust="spacing" >Button</text><text class="lb" x="50.3" y="90.8" font-size="12.35" fill="#bbbbbb" textLength="74.6" lengthAdjust="spacing" >ToggleButton</text><text class="lb" x="50.3" y="107.8" font-size="12.35" fill="#bbbbbb" textLength="55.8" lengthAdjust="spacing" >CheckBox</text><text class="lb" x="50.3" y="124.8" font-size="12.35" fill="#bbbbbb" textLength="68.2" lengthAdjust="spacing" >RadioButton</text><text class="lb" x="50.3" y="141.8" font-size="12.35" fill="#bbbbbb" textLength="103" lengthAdjust="spacing" >CheckedTextView</text><text class="lb" x="50.3" y="158.8" font-size="12.35" fill="#bbbbbb" textLength="42.8" lengthAdjust="spacing" >Spinner</text><text class="lb" x="50.3" y="175.8" font-size="12.35" fill="#bbbbbb" textLength="112.3" lengthAdjust="spacing" >ProgressBar (Large)</text><text class="lb" x="50.3" y="192.8" font-size="12.35" fill="#bbbbbb" textLength="68.2" lengthAdjust="spacing" >ProgressBar</text><text class="lb" x="50.3" y="209.8" font-size="12.35" fill="#bbbbbb" textLength="110" lengthAdjust="spacing" >ProgressBar (Small)</text><text class="lb" x="50.3" y="226.8" font-size="12.35" fill="#bbbbbb" textLength="137.9" lengthAdjust="spacing" >ProgressBar (Horizontal)</text><text class="lb" x="50.3" y="243.8" font-size="12.35" fill="#bbbbbb" textLength="45.8" lengthAdjust="spacing" >SeekBar</text><text class="lb" x="50.3" y="260.8" font-size="12.35" fill="#bbbbbb" textLength="104.9" lengthAdjust="spacing" >SeekBar (Discrete)</text><text class="lb" x="50.3" y="277.8" font-size="12.35" fill="#bbbbbb" textLength="110.2" lengthAdjust="spacing" >QuickContactBadge</text><text class="lb" x="50.3" y="294.8" font-size="12.35" fill="#bbbbbb" textLength="54.8" lengthAdjust="spacing" >RatingBar</text></g><clipPath id="cc"><rect x="4" y="316" width="176.7" height="30"/></clipPath><g clip-path="url(#cc)"><text class="lb" x="50.2" y="330.6" font-size="12.35" fill="#bbbbbb"><tspan font-weight="bold" font-size="12.8" style="stroke:none">activity_main</tspan> (ConstraintLayout)</text></g><text class="lb" x="319.6" y="17" font-size="11.6" fill="#bbbbbb" >Nexus 4</text><text class="lb" x="397.6" y="17" font-size="11.4" fill="#bbbbbb" >25</text><text class="lb" x="445.2" y="16.8" font-size="11.75" fill="#bbbbbb" >AppTheme</text><text class="lb" x="527.3" y="16.8" font-size="11.5" fill="#bbbbbb" >Language</text><text class="lb" x="305.2" y="45" font-size="12" fill="#bbbbbb" >8</text><text class="lb" x="626.6" y="45" font-size="10.9" fill="#bbbbbb" >44%</text></svg>
</body></html>
